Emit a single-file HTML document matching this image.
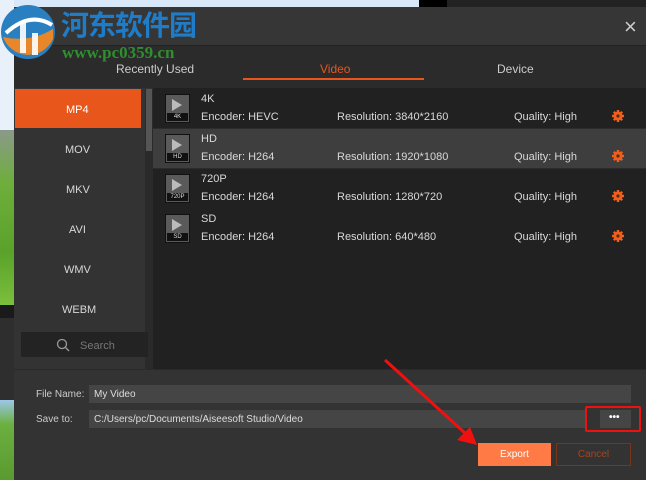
<!DOCTYPE html>
<html><head><meta charset="utf-8"><style>
*{margin:0;padding:0;box-sizing:border-box}
body{width:646px;height:480px;overflow:hidden;position:relative;background:#333;font-family:"Liberation Sans","Noto Sans CJK SC",sans-serif;font-size:11px;color:#d8d8d8}
.a{position:absolute}
.t{position:absolute;white-space:nowrap}
</style></head><body>
<div class="a" style="left:0;top:0;width:419px;height:7px;background:#d9e8f8"></div>
<div class="a" style="left:419px;top:0;width:28px;height:7px;background:#000"></div>
<div class="a" style="left:447px;top:0;width:199px;height:7px;background:#222"></div>
<div class="a" style="left:0;top:0;width:14px;height:130px;background:#e8f0fa"></div>
<div class="a" style="left:0;top:130px;width:14px;height:175px;background:linear-gradient(#8a9a8a,#6fae3c 30%,#5aa22a 70%,#7bbf3c)"></div>
<div class="a" style="left:0;top:305px;width:14px;height:13px;background:#1a1a1a"></div>
<div class="a" style="left:0;top:318px;width:14px;height:82px;background:#2e2e2e"></div>
<div class="a" style="left:0;top:400px;width:14px;height:80px;background:linear-gradient(#9cc8e8,#6cb040 30%,#5a9a30)"></div>
<div class="a" style="left:14px;top:7px;width:632px;height:38px;background:#363636"></div>
<div class="t" style="left:624px;top:14px;font-size:22px;color:#ccc;font-weight:300">×</div>
<div class="a" style="left:14px;top:45px;width:632px;height:43px;background:#2b2b2b;border-top:1px solid #222"></div>
<div class="t" style="left:116px;top:62px;font-size:12px;color:#ccc">Recently Used</div>
<div class="t" style="left:320px;top:62px;font-size:12px;color:#e8561b">Video</div>
<div class="a" style="left:243px;top:78px;width:181px;height:2px;background:#e8561b"></div>
<div class="t" style="left:497px;top:62px;font-size:12px;color:#ccc">Device</div>
<div class="a" style="left:14px;top:88px;width:139px;height:281px;background:#333"></div>
<div class="a" style="left:15px;top:89px;width:126px;height:39px;background:#e8561b"></div>
<div class="a" style="left:145px;top:89px;width:8px;height:280px;background:#2a2a2a"></div>
<div class="a" style="left:146px;top:89px;width:6px;height:62px;background:#555"></div>
<div class="t" style="left:66px;top:104px;color:#fff">MP4</div>
<div class="t" style="left:65px;top:144px">MOV</div>
<div class="t" style="left:66px;top:184px">MKV</div>
<div class="t" style="left:69px;top:224px">AVI</div>
<div class="t" style="left:64px;top:264px">WMV</div>
<div class="t" style="left:62px;top:304px">WEBM</div>
<div class="a" style="left:21px;top:332px;width:127px;height:25px;background:#232323"></div>
<svg class="a" style="left:56px;top:338px" width="14" height="14"><circle cx="6" cy="6" r="4.5" fill="none" stroke="#999" stroke-width="1.3"/><line x1="9.5" y1="9.5" x2="13" y2="13" stroke="#999" stroke-width="1.3"/></svg>
<div class="t" style="left:80px;top:340px;color:#777">Search</div>
<div class="a" style="left:153px;top:88px;width:493px;height:281px;background:#212121"></div>
<div class="a" style="left:153px;top:129px;width:493px;height:39px;background:#3e3e3e"></div>
<div class="a" style="left:153px;top:128px;width:493px;height:1px;background:#2c2c2c"></div>
<div class="a" style="left:153px;top:168px;width:493px;height:1px;background:#2c2c2c"></div>
<div class="a" style="left:165px;top:94px;width:25px;height:29px;background:#5a5a5a;border:1px solid #111"><div class="a" style="left:6px;top:4px;width:0;height:0;border-left:10px solid #bbb;border-top:6px solid transparent;border-bottom:6px solid transparent"></div><div class="a" style="left:1px;top:18px;width:21px;height:8px;background:#111;color:#ddd;font-size:6px;text-align:center;line-height:8px">4K</div></div>
<div class="a" style="left:165px;top:134px;width:25px;height:29px;background:#5a5a5a;border:1px solid #111"><div class="a" style="left:6px;top:4px;width:0;height:0;border-left:10px solid #bbb;border-top:6px solid transparent;border-bottom:6px solid transparent"></div><div class="a" style="left:1px;top:18px;width:21px;height:8px;background:#111;color:#ddd;font-size:6px;text-align:center;line-height:8px">HD</div></div>
<div class="a" style="left:165px;top:174px;width:25px;height:29px;background:#5a5a5a;border:1px solid #111"><div class="a" style="left:6px;top:4px;width:0;height:0;border-left:10px solid #bbb;border-top:6px solid transparent;border-bottom:6px solid transparent"></div><div class="a" style="left:1px;top:18px;width:21px;height:8px;background:#111;color:#ddd;font-size:6px;text-align:center;line-height:8px">720P</div></div>
<div class="a" style="left:165px;top:214px;width:25px;height:29px;background:#5a5a5a;border:1px solid #111"><div class="a" style="left:6px;top:4px;width:0;height:0;border-left:10px solid #bbb;border-top:6px solid transparent;border-bottom:6px solid transparent"></div><div class="a" style="left:1px;top:18px;width:21px;height:8px;background:#111;color:#ddd;font-size:6px;text-align:center;line-height:8px">SD</div></div>
<div class="t" style="left:201px;top:93px">4K</div>
<div class="t" style="left:201px;top:111px">Encoder: HEVC</div>
<div class="t" style="left:337px;top:111px">Resolution: 3840*2160</div>
<div class="t" style="left:514px;top:111px">Quality: High</div>
<div class="t" style="left:201px;top:133px">HD</div>
<div class="t" style="left:201px;top:151px">Encoder: H264</div>
<div class="t" style="left:337px;top:151px">Resolution: 1920*1080</div>
<div class="t" style="left:514px;top:151px">Quality: High</div>
<div class="t" style="left:201px;top:173px">720P</div>
<div class="t" style="left:201px;top:191px">Encoder: H264</div>
<div class="t" style="left:337px;top:191px">Resolution: 1280*720</div>
<div class="t" style="left:514px;top:191px">Quality: High</div>
<div class="t" style="left:201px;top:213px">SD</div>
<div class="t" style="left:201px;top:231px">Encoder: H264</div>
<div class="t" style="left:337px;top:231px">Resolution: 640*480</div>
<div class="t" style="left:514px;top:231px">Quality: High</div>
<svg width="0" height="0" style="position:absolute"><defs><g id="g"><circle cx="7" cy="7" r="4.5" fill="#f0601c"/><g stroke="#f0601c" stroke-width="2.4"><line x1="7" y1="1" x2="7" y2="13"/><line x1="1" y1="7" x2="13" y2="7"/><line x1="2.8" y1="2.8" x2="11.2" y2="11.2"/><line x1="11.2" y1="2.8" x2="2.8" y2="11.2"/></g><circle cx="7" cy="7" r="1.6" fill="#5a2a10"/></g></defs></svg>
<svg class="a" style="left:611px;top:109px" width="14" height="14"><use href="#g"/></svg>
<svg class="a" style="left:611px;top:149px" width="14" height="14"><use href="#g"/></svg>
<svg class="a" style="left:611px;top:189px" width="14" height="14"><use href="#g"/></svg>
<svg class="a" style="left:611px;top:229px" width="14" height="14"><use href="#g"/></svg>
<div class="a" style="left:14px;top:369px;width:632px;height:111px;background:#333;border-top:1px solid #2a2a2a"></div>
<div class="t" style="left:36px;top:389px;font-size:10px;color:#ccc">File Name:</div>
<div class="a" style="left:89px;top:385px;width:542px;height:18px;background:#454545"></div>
<div class="t" style="left:94px;top:389px;font-size:10px;color:#ddd">My Video</div>
<div class="t" style="left:36px;top:414px;font-size:10px;color:#ccc">Save to:</div>
<div class="a" style="left:89px;top:410px;width:497px;height:18px;background:#454545"></div>
<div class="t" style="left:94px;top:414px;font-size:10px;color:#ddd">C:/Users/pc/Documents/Aiseesoft Studio/Video</div>
<div class="a" style="left:600px;top:410px;width:31px;height:18px;background:#454545"></div>
<div class="t" style="left:609px;top:412px;font-size:10px;color:#fff;font-weight:bold">•••</div>
<div class="a" style="left:585px;top:406px;width:56px;height:26px;border:2px solid #f01010;border-radius:2px"></div>
<div class="a" style="left:478px;top:443px;width:73px;height:23px;background:#ff7a45;color:#fff;text-align:center;line-height:24px;font-size:10px">Export</div>
<div class="a" style="left:556px;top:443px;width:75px;height:23px;border:1px solid #7a3418;color:#a4461e;text-align:center;line-height:22px;font-size:10px">Cancel</div>
<svg class="a" style="left:0;top:0" width="646" height="480"><line x1="385" y1="360" x2="466" y2="434" stroke="#f01010" stroke-width="3"/><polygon points="477,445 457,440 470,427" fill="#f01010"/></svg>
<svg class="a" style="left:0;top:3px" width="58" height="58"><circle cx="28" cy="29" r="27" fill="#2a7fc0"/><path d="M3,34 A27,27 0 0 0 53,36 L53,26 Q30,40 3,34Z" fill="#e8862a"/><rect x="20" y="20" width="6" height="30" fill="#fff" opacity=".9"/><rect x="32" y="30" width="6" height="22" fill="#fff" opacity=".9"/><path d="M6,30 Q30,8 52,22" stroke="#fff" stroke-width="4" fill="none"/></svg>
<div class="t" style="left:61px;top:5px;font-size:28px;font-weight:bold;color:#1f7cc8;font-family:'Noto Sans CJK SC',sans-serif;letter-spacing:-1px;line-height:38px">河东软件园</div>
<div class="t" style="left:62px;top:43px;font-size:17px;font-weight:bold;color:#2f8f2f;font-family:'Liberation Serif',serif">www.pc0359.cn</div>
</body></html>
